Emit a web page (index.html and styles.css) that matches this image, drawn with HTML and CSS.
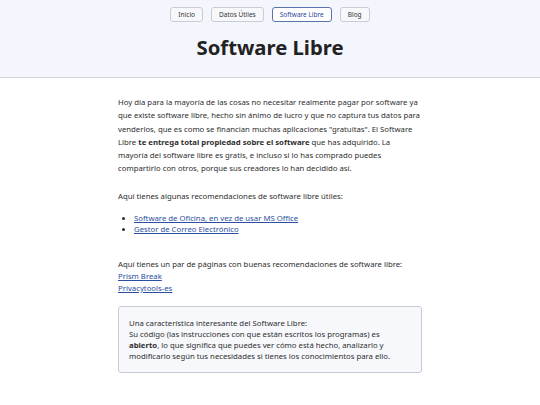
FILE: index.html
```html
<!DOCTYPE html>
<html lang="es">
<head>
<meta charset="utf-8">
<title>Software Libre</title>
<link rel="stylesheet" href="styles.css">
</head>
<body>
<header class="header">
  <nav class="nav">
    <a class="nav-btn" href="#">Inicio</a>
    <a class="nav-btn" href="#">Datos Útiles</a>
    <a class="nav-btn active" href="#">Software Libre</a>
    <a class="nav-btn" href="#">Blog</a>
  </nav>
  <h1 class="title">Software Libre</h1>
</header>
<main class="main">
  <p class="intro">Hoy día para la mayoría de las cosas no necesitar realmente pagar por software ya que existe software libre, hecho sin ánimo de lucro y que no captura tus datos para venderlos, que es como se financian muchas aplicaciones "gratuitas". El Software Libre <strong>te entrega total propiedad sobre el software</strong> que has adquirido. La<br>mayoría del software libre es gratis, e incluso si lo has comprado puedes compartirlo con otros, porque sus creadores lo han decidido así.</p>
  <p class="text">Aquí tienes algunas recomendaciones de software libre útiles:</p>
  <ul class="list">
    <li><a href="#">Software de Oficina, en vez de usar MS Office</a></li>
    <li><a href="#">Gestor de Correo Electrónico</a></li>
  </ul>
  <p class="text pages">Aquí tienes un par de páginas con buenas recomendaciones de software libre:<br><a href="#">Prism Break</a><br><a href="#">Privacytools-es</a></p>
  <div class="note">Una característica interesante del Software Libre:<br>Su código (las instrucciones con que están escritos los programas) es <strong>abierto</strong>, lo que significa que puedes ver cómo está hecho, analizarlo y modificarlo según tus necesidades si tienes los conocimientos para ello.</div>
</main>
</body>
</html>
```

FILE: styles.css
```css
html, body {
  margin: 0;
  padding: 0;
  background: #ffffff;
}
body {
  font-family: "Noto Sans", "Open Sans", sans-serif;
  color: #2e2e2e;
  font-size: 7.75px;
}
.header {
  background: #f3f6fd;
  border-bottom: 1px solid #cfd2d8;
  height: 78px;
  box-sizing: border-box;
  padding-top: 7px;
}
.nav {
  display: flex;
  justify-content: center;
  gap: 8px;
}
.nav-btn {
  display: block;
  height: 15px;
  line-height: 13px;
  box-sizing: border-box;
  padding: 0 7px;
  border: 1px solid #c9ccd3;
  border-radius: 3px;
  background: #f6f8fc;
  color: #333;
  font-size: 6.5px;
  text-decoration: none;
}
.nav-btn.active {
  border-color: #5b72b0;
  color: #2b4a9a;
  background: #ffffff;
}
.title {
  margin: 11px 0 0;
  text-align: center;
  font-size: 20.3px;
  line-height: 28px;
  font-weight: 700;
  color: #222;
}
.main {
  width: 304px;
  margin: 0 auto;
  padding-top: 18px;
}
.intro {
  margin: 0;
  line-height: 13.3px;
}
.text {
  margin: 14px 0 0;
  line-height: 12px;
}
.list {
  margin: 11px 0 0;
  padding-left: 16px;
  line-height: 11.5px;
}
a {
  color: #2b4fa0;
}
.pages {
  margin-top: 22px;
}
.note {
  margin-top: 12px;
  border: 1px solid #c8cbd6;
  border-radius: 3px;
  background: #f7f8fc;
  padding: 11px 10px 10px;
  line-height: 11px;
}
```
